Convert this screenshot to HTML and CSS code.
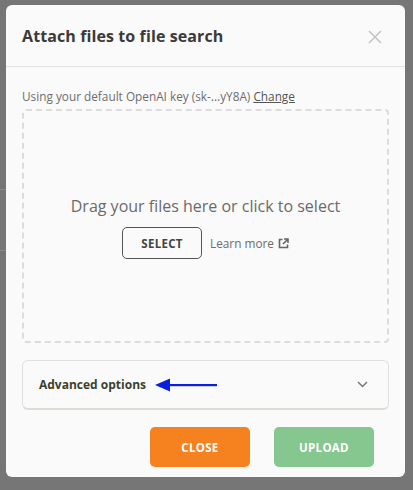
FILE: index.html
```html
<!DOCTYPE html>
<html>
<head>
<meta charset="utf-8">
<link rel="stylesheet" href="styles.css">
</head>
<body>
<div class="backdrop">
  <div class="bg-line l1"></div>
  <div class="bg-line l2"></div>
</div>
<div class="modal">
  <div class="modal-header">
    <h2 class="title">Attach files to file search</h2>
    <svg class="close-x" width="14" height="14" viewBox="0 0 14 14"><path d="M1 1L13 13M13 1L1 13" stroke="#c4c4c4" stroke-width="1.6" fill="none"/></svg>
  </div>
  <div class="modal-body">
    <p class="key">Using your default OpenAI key (sk-...yY8A) <a class="change">Change</a></p>
    <div class="dropzone">
      <p class="drag">Drag your files here or click to select</p>
      <div class="select-row">
        <button class="select-btn">SELECT</button>
        <span class="learn">Learn more
          <svg width="11" height="11" viewBox="0 0 11 11"><path d="M4.5 1.5H1.5V9.5H9.5V6.5" stroke="#666" stroke-width="1.6" fill="none"/><path d="M6 1H10V5M10 1L5 6" stroke="#666" stroke-width="1.6" fill="none"/></svg>
        </span>
      </div>
    </div>
    <div class="advanced">
      <span class="adv-label">Advanced options</span>
      <svg class="arrow" width="62" height="14" viewBox="0 0 62 14"><path d="M0 7L15 0.5V13.5Z" fill="#0a1ee0"/><rect x="12" y="6" width="50" height="2.2" fill="#0a1ee0"/></svg>
      <svg class="chev" width="11" height="7" viewBox="0 0 11 7"><path d="M1 1L5.5 5.5L10 1" stroke="#777" stroke-width="1.5" fill="none"/></svg>
    </div>
  </div>
  <div class="modal-footer">
    <button class="btn btn-close">CLOSE</button>
    <button class="btn btn-upload">UPLOAD</button>
  </div>
</div>
</body>
</html>
```

FILE: styles.css
```css
html, body { margin: 0; padding: 0; }
body {
  background: #767676;
  width: 413px;
  height: 490px;
  overflow: hidden;
  font-family: "Open Sans", "DejaVu Sans", sans-serif;
  position: relative;
}
.backdrop { position: absolute; inset: 0; }
.bg-line { position: absolute; left: 0; width: 6px; height: 1px; background: #888; }
.l1 { top: 189px; }
.l2 { top: 250px; }
.modal {
  position: relative;
  margin: 5px 0 0 6px;
  width: 399px;
  height: 472px;
  background: #fafafa;
  border-radius: 6px;
  display: flex;
  flex-direction: column;
}
.modal-header {
  flex-shrink: 0;
  height: 61px;
  border-bottom: 1px solid #e2e2de;
  display: flex;
  align-items: center;
  justify-content: space-between;
  padding: 0 23px 0 16px;
}
.title {
  margin: 0;
  font-size: 16px;
  font-weight: 700;
  color: #3a3a3a;
  letter-spacing: 0.1px;
}
.close-x { margin-top: 2px; }
.modal-body { padding: 21px 16px 0 16px; flex-shrink: 0; }
.key {
  margin: 0;
  font-size: 11.8px;
  color: #6d6d6d;
  line-height: 16px;
}
.change { color: #555; text-decoration: underline; }
.dropzone {
  margin-top: 5px;
  height: 234px;
  box-sizing: border-box;
  border: 2px dashed #dcdcdc;
  border-radius: 4px;
  display: flex;
  flex-direction: column;
  align-items: center;
  padding-top: 85px;
}
.drag {
  margin: 0;
  font-size: 16px;
  color: #6a6a6a;
  line-height: 20px;
}
.select-row {
  margin-top: 11px;
  display: flex;
  align-items: center;
  gap: 8px;
}
.select-btn {
  width: 80px;
  height: 32px;
  border: 1px solid #555;
  border-radius: 5px;
  background: transparent;
  font-family: inherit;
  font-size: 11.5px;
  font-weight: 700;
  color: #444;
  letter-spacing: 0.3px;
}
.learn {
  font-size: 11.8px;
  color: #6d6d6d;
  display: flex;
  align-items: center;
  gap: 4px;
}
.advanced {
  margin-top: 17px;
  height: 50px;
  box-sizing: border-box;
  border: 1px solid #e0e0dc;
  border-bottom: 2px solid #dcdcd6;
  border-radius: 6px;
  display: flex;
  align-items: center;
  padding: 0 20px 0 16px;
}
.adv-label {
  font-size: 12px;
  font-weight: 700;
  color: #3c3f2e;
}
.arrow { margin-left: 9px; }
.chev { margin-left: auto; }
.modal-footer {
  display: flex;
  justify-content: flex-end;
  gap: 24px;
  padding: 17px 31px 0 0;
}
.btn {
  width: 100px;
  height: 40px;
  border: none;
  border-radius: 5px;
  color: #fff;
  font-family: inherit;
  font-size: 11.5px;
  font-weight: 700;
  letter-spacing: 0.3px;
}
.btn-close { background: #f6821f; }
.btn-upload { background: #85c78f; }
```
